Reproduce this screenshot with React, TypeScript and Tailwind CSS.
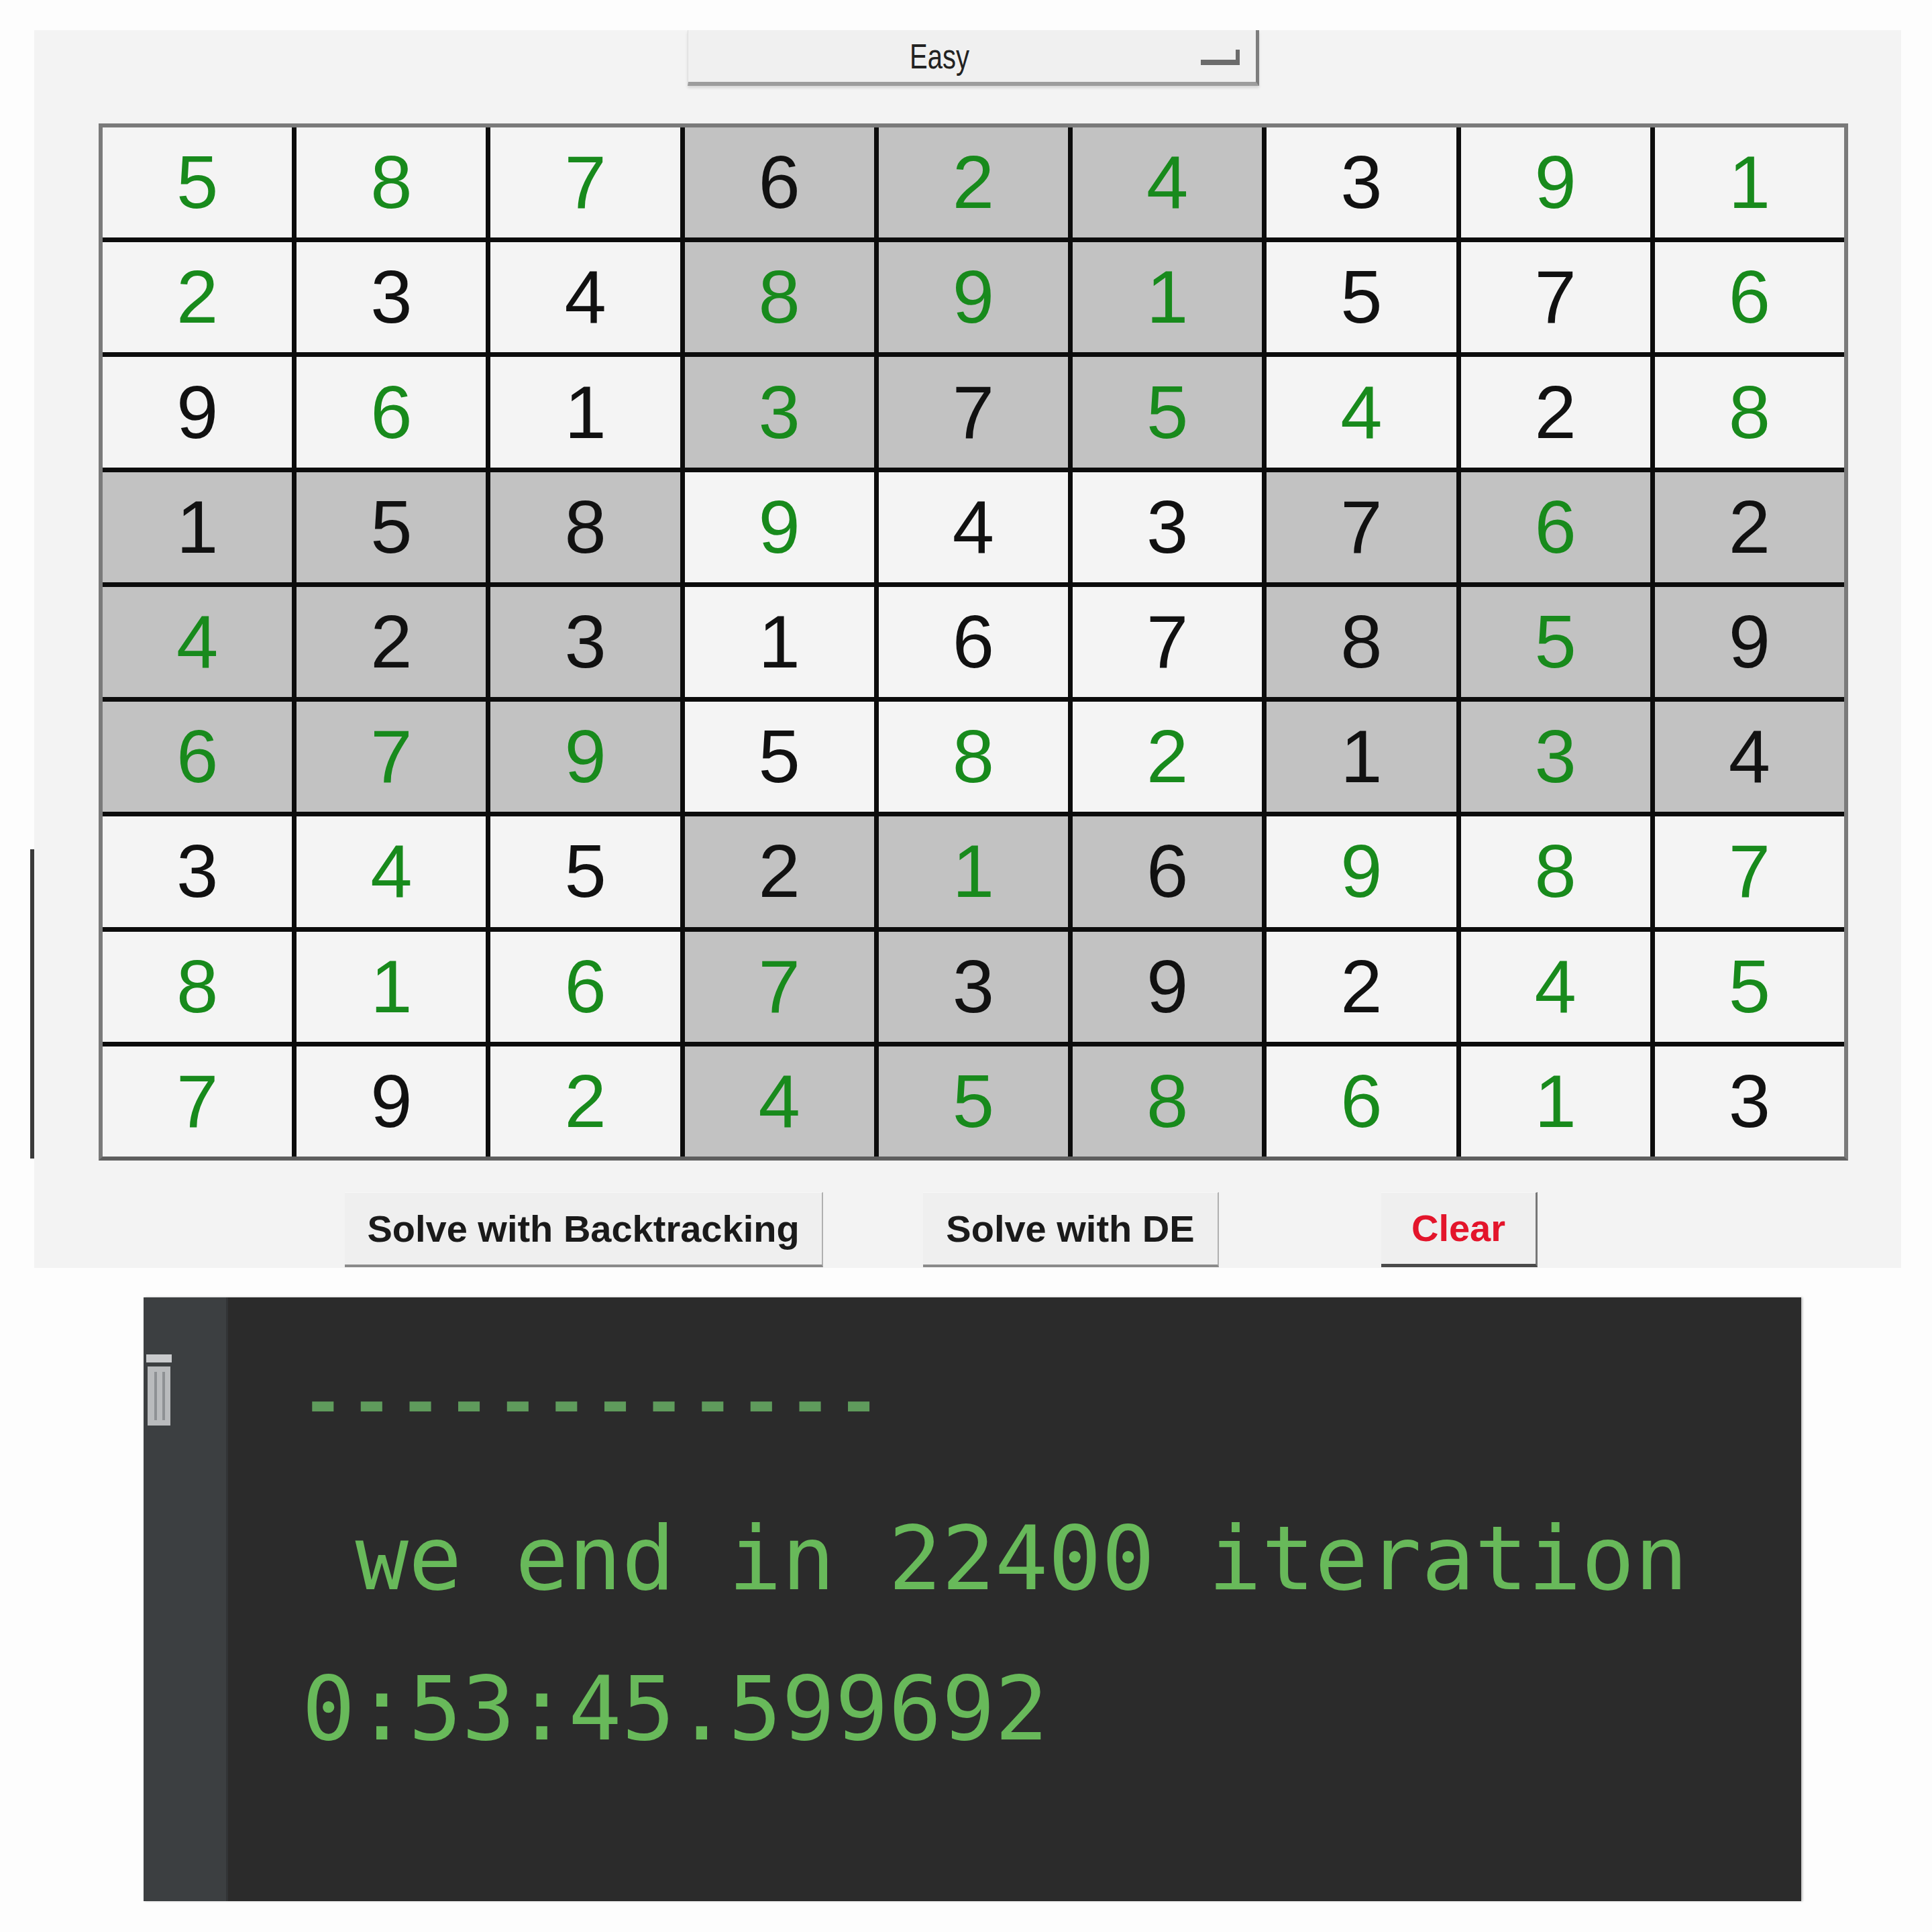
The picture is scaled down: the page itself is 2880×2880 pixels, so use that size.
import React from 'react';

const board: string[] = [
    '587624391',
    '234891576',
    '961375428',
    '158943762',
    '423167859',
    '679582134',
    '345216987',
    '816739245',
    '792458613',
];

// g = given (green), b = solved (black)
const marks: string[] = [
    'gggbggbgg',
    'gbbgggbbg',
    'bgbgbggbg',
    'bbbgbbbgb',
    'gbbbbbbgb',
    'gggbggbgb',
    'bgbbgbggg',
    'ggggbbbgg',
    'gbggggggb',
];

const Cell = ({ r, c }: { r: number; c: number }) => {
    const box = Math.floor(r / 3) * 3 + Math.floor(c / 3);
    const shaded = box % 2 === 1;
    const green = marks[r][c] === 'g';
    return (
        <div
            className={`flex items-center justify-center text-[112px] leading-none font-['Liberation_Sans',Arial,sans-serif] ${
                shaded ? 'bg-[#c2c2c2]' : 'bg-[#f4f4f4]'
            } ${green ? 'text-[#188a1c]' : 'text-[#111111]'}`}
        >
            {board[r][c]}
        </div>
    );
};

const App = () => {
    return (
        <div className="w-[2880px] h-[2880px] bg-[#fdfdfd] flex flex-col pt-[45px] overflow-hidden">
            <div className="flex">
                <div className="ml-[45px] mt-[1221px] w-[6px] h-[461px] bg-[#3a3a3a]" />
                <div className="w-[2783px] h-[1845px] bg-[#f3f3f3] flex flex-col">
                    {/* difficulty dropdown */}
                    <div className="ml-[974px] w-[852px] h-[83px] flex items-center bg-[#f0f0f0] border-l border-l-[#dedede] border-r-[5px] border-r-[#7d7d7d] border-b-[6px] border-b-[#9d9d9d] shadow-[0_3px_4px_rgba(0,0,0,0.12)]">
                        <span className="ml-[330px] text-[52px] leading-none text-[#222] font-['Liberation_Sans',Arial,sans-serif] scale-x-[0.77] origin-left">
                            Easy
                        </span>
                        <svg className="ml-auto mr-[24px] mt-[4px]" width="58" height="24" viewBox="0 0 58 24">
                            <rect x="0" y="15" width="58" height="8" fill="#6c6c6c" />
                            <rect x="52" y="0" width="6" height="23" fill="#6c6c6c" />
                        </svg>
                    </div>

                    {/* board */}
                    <div className="mt-[56px] ml-[96px] w-[2608px] h-[1546px] border-[6px] border-[#7a7a7a] border-b-[#5e5e5e] bg-[#0c0c0c] grid grid-cols-9 grid-rows-9 gap-[7px]">
                        {board.map((row, r) =>
                            row.split('').map((_, c) => <Cell key={`${r}-${c}`} r={r} c={c} />)
                        )}
                    </div>

                    {/* actions */}
                    <div className="mt-[47px] h-[112px] flex font-['Liberation_Sans',Arial,sans-serif] font-bold text-[56px]">
                        <button className="ml-[463px] w-[713px] h-full bg-[#efefef] border-t border-t-[#f8f8f8] border-r-[2px] border-r-[#b0b0b0] border-b-[4px] border-b-[#8a8a8a] text-[#1a1a1a]">
                            Solve with Backtracking
                        </button>
                        <button className="ml-[149px] w-[441px] h-full bg-[#efefef] border-t border-t-[#f8f8f8] border-r-[2px] border-r-[#b0b0b0] border-b-[4px] border-b-[#8a8a8a] text-[#1a1a1a]">
                            Solve with DE
                        </button>
                        <button className="ml-[242px] w-[233px] h-full bg-[#efefef] border-t border-t-[#f8f8f8] border-r-[3px] border-r-[#777] border-b-[5px] border-b-[#4a4a4a] text-[#e3152b]">
                            Clear
                        </button>
                    </div>
                </div>
            </div>

            {/* console output */}
            <div className="mt-[44px] ml-[214px] w-[2471px] h-[900px] flex shadow-[2px_0_3px_rgba(0,0,0,0.25)]">
                <div className="w-[126px] h-full bg-[#3c3f41] border-r-[3px] border-r-[#323436] pt-[85px] pl-[4px]">
                    <svg width="40" height="106" viewBox="0 0 40 106">
                        <rect x="0" y="0" width="38" height="12" fill="#c9cbcd" />
                        <rect x="2" y="18" width="34" height="88" fill="#b9bbbd" />
                        <rect x="12" y="26" width="4" height="72" fill="#8e9194" />
                        <rect x="24" y="26" width="4" height="72" fill="#8e9194" />
                    </svg>
                </div>
                <div className="flex-1 h-full bg-[#2b2b2b] pl-[110px] pt-[35px] flex flex-col font-['DejaVu_Sans_Mono',monospace] whitespace-pre">
                    <div className="h-[242px] leading-[242px] text-[104px] tracking-[10px] font-bold text-[#5f9b5c]">------------</div>
                    <div className="h-[224px] leading-[224px] text-[132px] text-[#68b95a]"> we end in 22400 iteration</div>
                    <div className="h-[224px] leading-[224px] text-[132px] text-[#68b95a]">0:53:45.599692</div>
                </div>
            </div>
        </div>
    );
};

export default App;
